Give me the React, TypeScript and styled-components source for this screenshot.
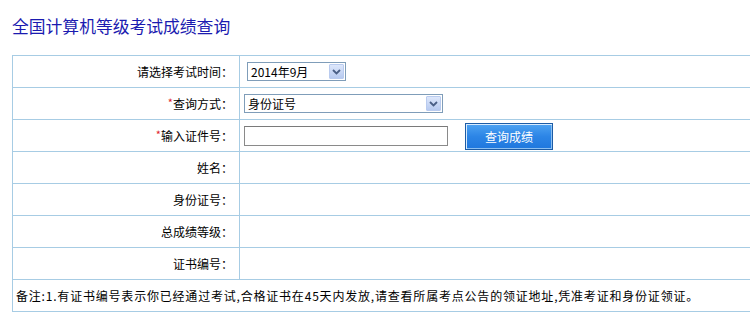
import React from 'react'
import styled, { createGlobalStyle } from 'styled-components'

const GlobalStyle = createGlobalStyle`
  html, body {
    margin: 0;
    padding: 0;
    overflow: hidden;
    background: #fff;
  }
  body {
    font-family: "Liberation Sans", "Noto Sans CJK SC", sans-serif;
    font-size: 12px;
    color: #000;
  }
`

const App = () => (
  <>
    <GlobalStyle />
    <Page>
      <Title>全国计算机等级考试成绩查询</Title>
      <Form>
        <Label>请选择考试时间：</Label>
        <Value>
          <Select width={99} offset={3}>
            <SelectText>2014年9月</SelectText>
            <Arrow />
          </Select>
        </Value>

        <Label>
          <Star>*</Star>查询方式：
        </Label>
        <Value>
          <Select width={199}>
            <SelectText>身份证号</SelectText>
            <Arrow />
          </Select>
        </Value>

        <Label>
          <Star>*</Star>输入证件号：
        </Label>
        <Value>
          <Input type="text" />
          <Button>查询成绩</Button>
        </Value>

        <Label>姓名：</Label>
        <Value />

        <Label>身份证号：</Label>
        <Value />

        <Label>总成绩等级：</Label>
        <Value />

        <Label>证书编号：</Label>
        <Value />

        <Note>
          备注:1.有证书编号表示你已经通过考试,合格证书在45天内发放,请查看所属考点公告的领证地址,凭准考证和身份证领证。
        </Note>
      </Form>
    </Page>
  </>
)

const Arrow = () => (
  <ArrowBox>
    <svg width="9" height="6" viewBox="0 0 9 6">
      <path d="M1 1 L4.5 4.5 L8 1" fill="none" stroke="#4a5f86" strokeWidth="1.8" />
    </svg>
  </ArrowBox>
)

const Page = styled.div`
  width: 750px;
  padding: 0 0 0 12px;
`

const Title = styled.h1`
  margin: 0;
  height: 55px;
  line-height: 52px;
  font-family: "Noto Sans CJK SC", sans-serif;
  font-weight: normal;
  font-size: 16.8px;
  color: #1b1bb0;
`

const Form = styled.div`
  display: grid;
  grid-template-columns: 227px 520px;
  grid-auto-rows: 32px;
  border-top: 1px solid #a7cce4;
  border-left: 1px solid #a7cce4;
`

const Cell = styled.div`
  box-sizing: border-box;
  display: flex;
  align-items: center;
  border-right: 1px solid #a7cce4;
  border-bottom: 1px solid #a7cce4;
  font-family: "Noto Sans CJK SC", sans-serif;
  font-size: 12px;
`

const Label = styled(Cell)`
  justify-content: flex-end;
  padding-right: 6px;
`

const Value = styled(Cell)`
  padding-left: 4px;
`

const Note = styled(Cell)`
  grid-column: 1 / 3;
  padding-left: 3px;
  white-space: nowrap;
  letter-spacing: 0.8px;
`

const Star = styled.span`
  color: #e0222e;
  font-size: 11px;
  position: relative;
  top: -2px;
`

const Select = styled.div<{ width: number; offset?: number }>`
  box-sizing: border-box;
  width: ${p => p.width}px;
  height: 19px;
  margin-left: ${p => p.offset || 0}px;
  border: 1px solid #7f9db9;
  display: flex;
  align-items: center;
  justify-content: space-between;
  padding: 0 1px 0 3px;
  background: #fff;
`

const SelectText = styled.span`
  font-family: "Noto Sans CJK SC", sans-serif;
  font-size: 12px;
  line-height: 15px;
`

const ArrowBox = styled.span`
  box-sizing: border-box;
  width: 15px;
  height: 15px;
  display: flex;
  align-items: center;
  justify-content: center;
  border: 1px solid #b9cbef;
  border-radius: 1px;
  background: linear-gradient(#dde7fb, #b7caf0);
`

const Input = styled.input`
  box-sizing: border-box;
  width: 204px;
  height: 20px;
  margin: 0;
  padding: 0 2px;
  border: 1px solid #8a8a8a;
  border-top-color: #7a7a7a;
  outline: none;
`

const Button = styled.button`
  box-sizing: border-box;
  width: 88px;
  height: 27px;
  margin: 1px 0 0 17px;
  padding: 0;
  border: 1px solid #1d5ca5;
  box-shadow: inset 1px 1px 0 #d8ecff, inset -1px -1px 0 #8cc0f2;
  background: linear-gradient(#4ea3f2, #2c85e6 50%, #1f77de);
  color: #fff;
  font-family: "Noto Sans CJK SC", sans-serif;
  font-size: 12px;
  cursor: pointer;
`

export default App
